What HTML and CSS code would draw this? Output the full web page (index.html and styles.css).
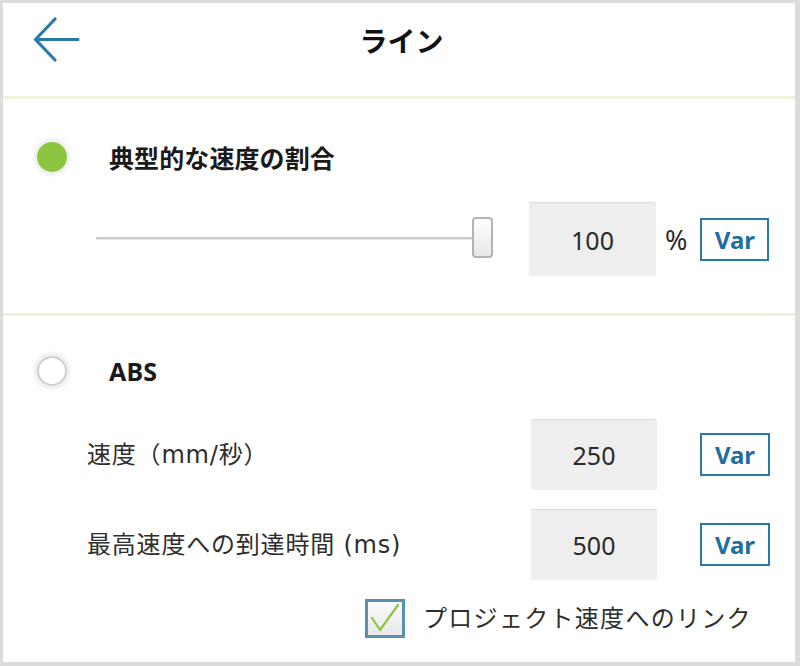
FILE: index.html
```html
<!DOCTYPE html>
<html lang="ja">
<head>
<meta charset="utf-8">
<title>ライン</title>
<link rel="stylesheet" href="styles.css">
</head>
<body>
<div class="panel">
  <header class="header">
    <div class="back">
      <svg width="47" height="45" viewBox="0 0 47 45" aria-hidden="true">
        <path d="M45 22.5 H3 M22 2 L2.5 22.5 L22 43" fill="none" stroke="#2a7aa9" stroke-width="3.2" stroke-linecap="round" stroke-linejoin="round"/>
      </svg>
    </div>
    <h1 class="title">ライン</h1>
    <div class="spacer"></div>
  </header>

  <section class="section section-top">
    <div class="option-row">
      <span class="radio radio-on"></span>
      <span class="option-label">典型的な速度の割合</span>
    </div>
    <div class="slider-row">
      <div class="slider">
        <div class="track"></div>
        <div class="thumb"></div>
      </div>
      <div class="value-box value-tall">100</div>
      <span class="unit">%</span>
      <button class="var-btn">Var</button>
    </div>
  </section>

  <section class="section section-bottom">
    <div class="option-row option-row-abs">
      <span class="radio"></span>
      <span class="option-label">ABS</span>
    </div>
    <div class="field-row field-first">
      <span class="field-label">速度（mm/秒）</span>
      <div class="value-box">250</div>
      <button class="var-btn var-wide">Var</button>
    </div>
    <div class="field-row">
      <span class="field-label">最高速度への到達時間 (ms)</span>
      <div class="value-box">500</div>
      <button class="var-btn var-wide">Var</button>
    </div>
    <div class="check-row">
      <span class="checkbox">
        <svg width="34" height="33" viewBox="0 0 34 33" aria-hidden="true">
          <path d="M4 16 L12 28 L30 3" fill="none" stroke="#8cc63f" stroke-width="2.2" stroke-linecap="round" stroke-linejoin="round"/>
        </svg>
      </span>
      <span class="check-label">プロジェクト速度へのリンク</span>
    </div>
  </section>
</div>
</body>
</html>
```

FILE: styles.css
```css
html, body {
  margin: 0;
  padding: 0;
}

body {
  background: #dcdcdc;
  width: 800px;
  height: 666px;
  overflow: hidden;
  font-family: "Noto Sans", "Noto Sans CJK JP", sans-serif;
  color: #2b2b2b;
}

.panel {
  margin: 3px 5px 0 3px;
  height: 659px;
  background: #ffffff;
  display: flex;
  flex-direction: column;
}

/* Header */
.header {
  height: 79px;
  padding: 14px 25px 0 30px;
  border-bottom: 3px solid #edf2da;
  display: grid;
  grid-template-columns: 1fr auto 1fr;
  align-items: start;
  flex: none;
}

.back {
  height: 45px;
  display: flex;
  align-items: center;
}

.back svg {
  display: block;
}

.title {
  margin: 0;
  height: 45px;
  display: flex;
  align-items: center;
  font-family: "Noto Sans CJK JP", sans-serif;
  font-size: 28px;
  font-weight: 700;
  color: #111111;
}

/* Sections */
.section {
  display: flex;
  flex-direction: column;
  box-sizing: border-box;
}

.section-top {
  height: 217px;
  padding: 38px 25px 0 34px;
  border-bottom: 3px solid #edf2da;
  flex: none;
}

.section-bottom {
  flex: 1;
  padding: 35px 25px 0 34px;
}

.option-row {
  height: 40px;
  display: flex;
  align-items: center;
}

.radio {
  width: 30px;
  height: 30px;
  border-radius: 50%;
  box-sizing: border-box;
  border: 2px solid #cfcfcf;
  background: #ffffff;
  box-shadow: 0 0 0 3px #f1f1f1, 0 0 4px 4px #f4f4f4;
  flex: none;
}

.radio-on {
  border: none;
  background: #8cc63f;
}

.option-label {
  margin-left: 42px;
  font-size: 25px;
  font-weight: 700;
  color: #1a1a1a;
  letter-spacing: 0.1px;
}

/* Slider row */
.slider-row {
  margin-top: 25px;
  display: flex;
  align-items: center;
}

.slider {
  margin-left: 59px;
  width: 397px;
  height: 41px;
  display: flex;
  align-items: center;
  margin-top: -3px;
}

.track {
  flex: 1;
  height: 2px;
  background: #c9c9c9;
  box-shadow: 0 1px 1px #e6e6e6;
}

.thumb {
  width: 21px;
  height: 41px;
  box-sizing: border-box;
  border: 2px solid #b3b3b3;
  border-radius: 4px;
  background: linear-gradient(#ffffff, #e8e8e8);
  flex: none;
}

.value-box {
  width: 126px;
  height: 71px;
  box-sizing: border-box;
  background: #eeeeee;
  border-top: 1px solid #dcdcdc;
  border-radius: 2px;
  display: flex;
  align-items: center;
  justify-content: center;
  font-size: 25px;
  color: #2b2b2b;
  flex: none;
}

.value-tall {
  height: 74px;
  margin-left: 36px;
  width: 127px;
}

.unit {
  margin-left: 9px;
  font-size: 27px;
  color: #2b2b2b;
}

.var-btn {
  margin-left: 13px;
  width: 69px;
  height: 43px;
  box-sizing: border-box;
  border: 2px solid #2a7aa9;
  background: #ffffff;
  color: #1f6e9e;
  font-family: "Noto Sans", sans-serif;
  font-size: 24px;
  font-weight: 700;
  padding: 0;
  display: flex;
  align-items: center;
  justify-content: center;
  flex: none;
}

.var-wide {
  margin-left: 43px;
  width: 70px;
}

/* Field rows */
.field-row {
  margin-top: 19px;
  padding-left: 50px;
  display: flex;
  align-items: center;
}

.field-first {
  margin-top: 28px;
}

.field-label {
  flex: 1;
  font-family: "DejaVu Sans", "Noto Sans CJK JP", sans-serif;
  font-size: 24px;
  color: #2e2e2e;
  letter-spacing: 0.8px;
  margin-top: -5px;
}

/* Checkbox */
.check-row {
  margin-top: 19px;
  padding-left: 328px;
  display: flex;
  align-items: center;
}

.checkbox {
  width: 40px;
  height: 39px;
  box-sizing: border-box;
  border: 3px solid #5b8fb1;
  background: linear-gradient(#fafafa, #e9e9e9);
  display: flex;
  align-items: center;
  justify-content: center;
  flex: none;
}

.checkbox svg {
  display: block;
}

.check-label {
  margin-left: 18px;
  font-family: "Noto Sans CJK JP", sans-serif;
  font-size: 24px;
  color: #2e2e2e;
  letter-spacing: 1.3px;
  margin-top: -4px;
}
```
